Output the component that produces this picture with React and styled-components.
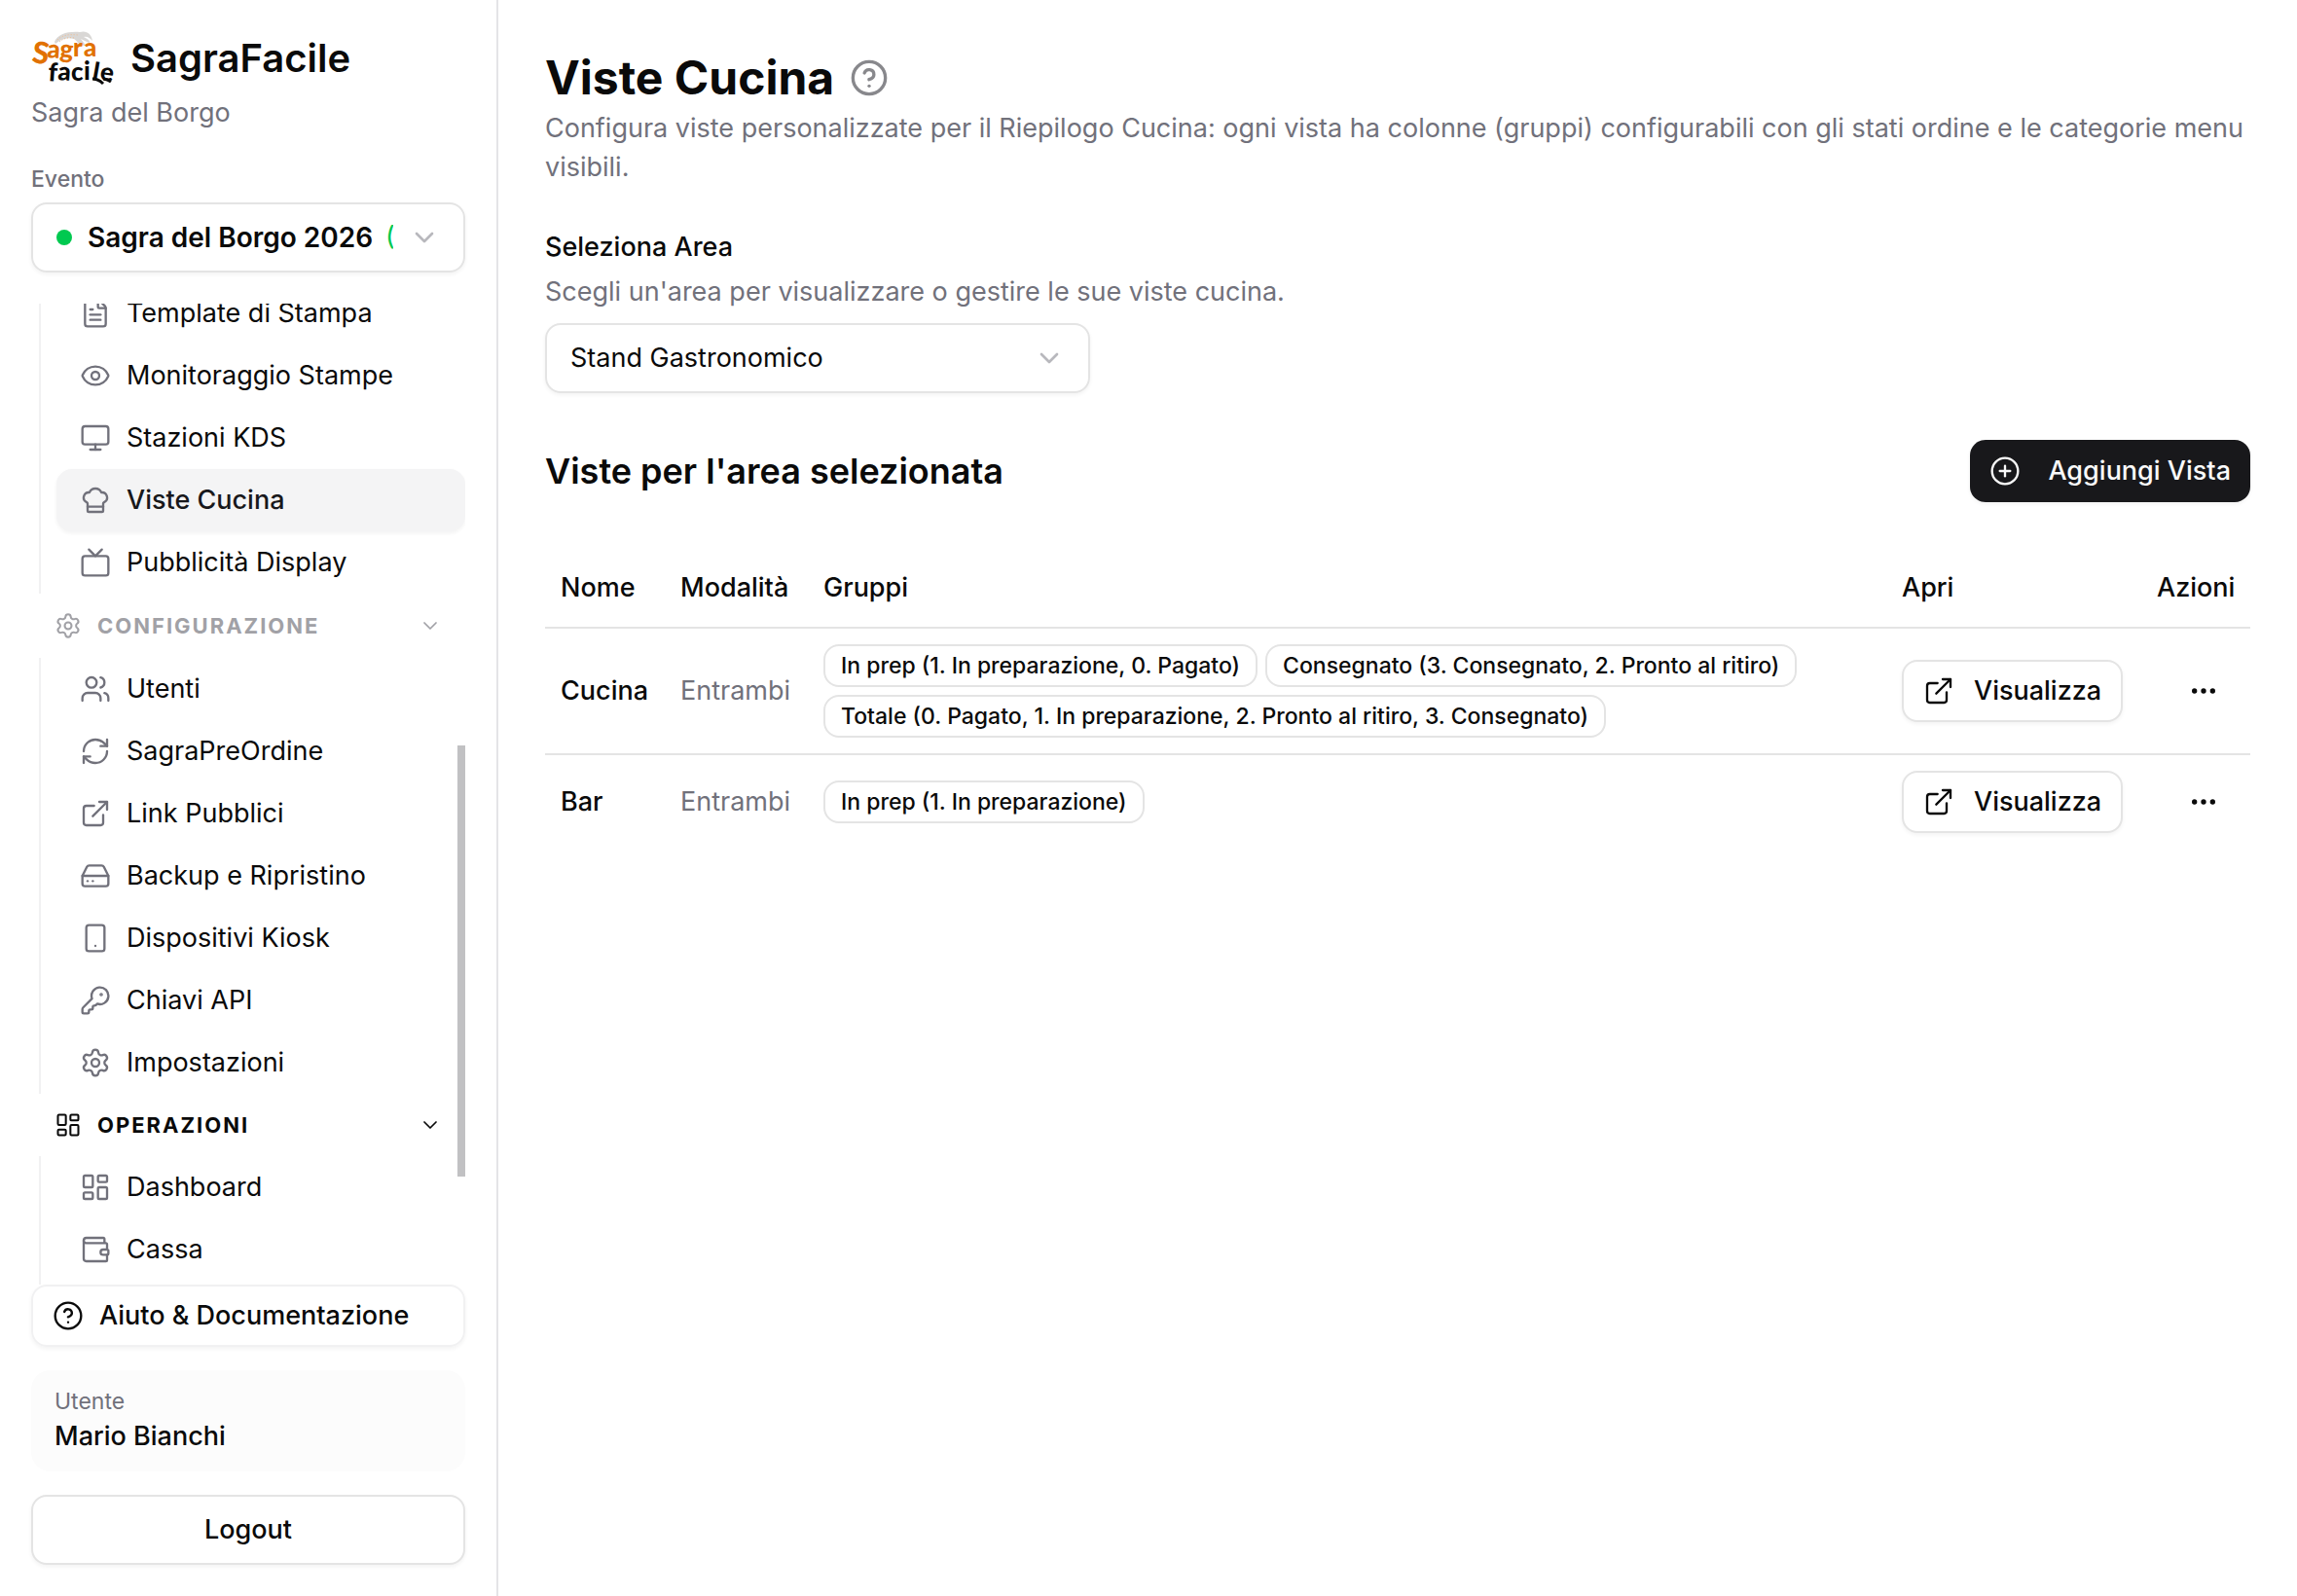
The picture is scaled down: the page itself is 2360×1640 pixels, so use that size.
import styled, { createGlobalStyle } from 'styled-components';
import {
  ChefHat,
  ChevronDown,
  CircleHelp,
  CirclePlus,
  Ellipsis,
  ExternalLink,
  Eye,
  FileText,
  HardDrive,
  KeyRound,
  LayoutDashboard,
  Monitor,
  RefreshCw,
  Settings,
  Smartphone,
  Tv,
  Users,
  Wallet,
} from 'lucide-react';

const GlobalStyle = createGlobalStyle`
  *, *::before, *::after {
    box-sizing: border-box;
  }

  body {
    margin: 0;
    background: #fff;
    color: #0a0a0a;
    font-family: Inter, 'Liberation Sans', sans-serif;
    font-size: 27px;
    line-height: 40px;
  }

  button, select {
    font: inherit;
    color: inherit;
  }

  h1, h2, p {
    margin: 0;
  }

  svg {
    flex-shrink: 0;
  }
`;

const Layout = styled.div`
  display: flex;
  height: 100vh;
`;

const Sidebar = styled.aside`
  display: flex;
  flex-direction: column;
  flex: none;
  width: 512px;
  padding: 32px;
  border-right: 2px solid #e4e4e7;
`;

const Brand = styled.div`
  display: flex;
  align-items: center;
  gap: 16px;
  height: 56px;
`;

const BrandName = styled.span`
  font-size: 40px;
  font-weight: 600;
`;

const OrgName = styled.p`
  margin-top: 8px;
  color: #71717b;
`;

const EventLabel = styled.label`
  margin: 32px 0 8px;
  color: #71717b;
  font-size: 23px;
  font-weight: 500;
  line-height: 32px;
`;

const SelectShell = styled.div`
  display: flex;
  align-items: center;
  gap: 16px;
  width: 100%;
  max-width: ${(props) => props.$maxWidth || 'none'};
  height: 72px;
  padding: 0 24px;
  border: 2px solid #e4e4e4;
  border-radius: 16px;
  box-shadow: 0 2px 4px rgba(0, 0, 0, 0.05);

  svg {
    color: #b8b8bd;
  }
`;

const SelectValue = styled.div`
  display: flex;
  flex: 1;
  align-items: center;
  gap: 12px;
  min-width: 0;
  overflow: hidden;
`;

const Select = styled.select`
  flex: ${(props) => (props.$grow ? 1 : 'none')};
  padding: 0;
  border: 0;
  outline: 0;
  background: none;
  appearance: none;
  font-size: ${(props) => (props.$strong ? 28 : 27)}px;
  font-weight: ${(props) => (props.$strong ? 600 : 400)};
`;

const Dot = styled.span`
  flex: none;
  width: 16px;
  height: 16px;
  margin-right: 4px;
  border-radius: 50%;
  background: #00c950;
`;

const Status = styled.span`
  flex: none;
  color: #00c950;
`;

const NavArea = styled.div`
  position: relative;
  display: flex;
  flex: 1;
  min-height: 0;
  margin-top: 32px;
`;

const Nav = styled.nav`
  display: flex;
  flex: 1;
  flex-direction: column;
  justify-content: flex-end;
  overflow: hidden;
`;

const ScrollThumb = styled.div`
  position: absolute;
  top: 45%;
  right: 0;
  width: 8px;
  height: 44%;
  background: #c1c1c3;
`;

const NavGroup = styled.div`
  flex: none;
  margin-left: 8px;
  padding: 0 0 ${(props) => (props.$last ? 4 : 0)}px 16px;
  border-left: 2px solid #f1f1f2;
`;

const NavHeader = styled.button`
  display: flex;
  flex: none;
  align-items: center;
  gap: 16px;
  height: ${(props) => (props.$active ? 64 : 66)}px;
  padding: 0 24px;
  border: 0;
  background: none;
  color: ${(props) => (props.$active ? '#0a0a0a' : '#a1a1a6')};
  font-size: 22px;
  font-weight: 700;
  letter-spacing: 2px;
  text-align: left;
  text-transform: uppercase;

  span {
    flex: 1;
  }
`;

const NavItem = styled.a`
  display: flex;
  align-items: center;
  gap: 16px;
  height: 64px;
  padding: 0 24px;
  border-radius: 16px;
  background: ${(props) => (props.$active ? '#f4f4f5' : 'transparent')};
  box-shadow: ${(props) => (props.$active ? '0 2px 4px rgba(0, 0, 0, 0.05)' : 'none')};
  color: ${(props) => (props.$active ? '#18181b' : '#0a0a0a')};
  font-weight: ${(props) => (props.$active ? 500 : 400)};
  text-decoration: none;

  svg {
    color: #71717b;
  }
`;

const HelpLink = styled.a`
  display: flex;
  align-items: center;
  gap: 16px;
  height: 64px;
  padding: 0 20px;
  border: 2px solid #f1f1f2;
  border-radius: 16px;
  box-shadow: 0 2px 4px rgba(0, 0, 0, 0.05);
  color: #0a0a0a;
  font-weight: 500;
  text-decoration: none;
`;

const UserCard = styled.div`
  margin: 24px 0;
  padding: 16px 24px;
  border-radius: 20px;
  background: #fcfcfc;
  font-weight: 500;
`;

const UserLabel = styled.p`
  color: #71717b;
  font-size: 23px;
  font-weight: 400;
  line-height: 32px;
`;

const Button = styled.button`
  display: inline-flex;
  align-items: center;
  justify-content: center;
  gap: ${(props) => props.$gap || 20}px;
  height: ${(props) => props.$height || 64}px;
  padding: 0 20px;
  border: ${(props) => (props.$primary ? '0' : '2px solid #e4e4e4')};
  border-radius: 16px;
  background: ${(props) => (props.$primary ? '#18181b' : '#fff')};
  box-shadow: 0 2px 4px rgba(0, 0, 0, 0.05);
  color: ${(props) => (props.$primary ? '#fafafa' : '#0a0a0a')};
  font-weight: 500;
  text-decoration: none;
  white-space: nowrap;
`;

const IconButton = styled.button`
  display: inline-flex;
  align-items: center;
  justify-content: center;
  width: 64px;
  height: 64px;
  padding: 0;
  border: 0;
  background: none;
  vertical-align: top;
`;

const Main = styled.main`
  flex: 1;
  min-width: 0;
  padding: 48px;
`;

const TitleRow = styled.div`
  display: flex;
  align-items: center;
  gap: 16px;
  height: 64px;
`;

const Title = styled.h1`
  font-size: 48px;
  font-weight: 700;
`;

const TitleHelp = styled.button`
  display: flex;
  padding: 0;
  border: 0;
  background: none;
  color: #88888c;
`;

const Muted = styled.p`
  color: #71717b;
`;

const AreaField = styled.div`
  display: flex;
  flex-direction: column;
  margin: 44px 0 48px;
`;

const AreaLabel = styled.label`
  margin-bottom: 8px;
  font-weight: 500;
  line-height: 36px;
`;

const AreaHint = styled(Muted)`
  margin-bottom: 12px;
`;

const SectionHead = styled.div`
  display: flex;
  align-items: center;
  justify-content: space-between;
  margin-bottom: 48px;
`;

const SectionTitle = styled.h2`
  font-size: 36px;
  font-weight: 600;
`;

const Table = styled.table`
  width: 100%;
  border-spacing: 0;
  table-layout: fixed;

  tr:not(:last-child) td {
    border-bottom: 2px solid #e4e4e4;
  }
`;

const Th = styled.th`
  width: ${(props) => (props.$width ? `${props.$width}px` : 'auto')};
  height: 82px;
  padding: 0 16px;
  border-bottom: 2px solid #e4e4e4;
  font-weight: 500;
  text-align: ${(props) => (props.$right ? 'right' : 'left')};
`;

const Td = styled.td`
  padding: 16px;
  color: ${(props) => (props.$muted ? '#71717b' : 'inherit')};
  font-weight: ${(props) => (props.$strong ? 500 : 400)};
  text-align: ${(props) => (props.$right ? 'right' : 'left')};
`;

const BadgeList = styled.div`
  display: flex;
  flex-wrap: wrap;
  gap: 8px;
`;

const Badge = styled.span`
  padding: 4px 16px;
  border: 2px solid #e4e4e4;
  border-radius: 16px;
  font-size: 23px;
  font-weight: 500;
  line-height: 32px;
  white-space: nowrap;
`;

const views = [
  {
    name: 'Cucina',
    mode: 'Entrambi',
    groups: [
      'In prep (1. In preparazione, 0. Pagato)',
      'Consegnato (3. Consegnato, 2. Pronto al ritiro)',
      'Totale (0. Pagato, 1. In preparazione, 2. Pronto al ritiro, 3. Consegnato)',
    ],
  },
  { name: 'Bar', mode: 'Entrambi', groups: ['In prep (1. In preparazione)'] },
];

const kitchenItems = [
  { label: 'Template di Stampa', icon: FileText },
  { label: 'Monitoraggio Stampe', icon: Eye },
  { label: 'Stazioni KDS', icon: Monitor },
  { label: 'Viste Cucina', icon: ChefHat, active: true },
  { label: 'Pubblicità Display', icon: Tv },
];

const configItems = [
  { label: 'Utenti', icon: Users },
  { label: 'SagraPreOrdine', icon: RefreshCw },
  { label: 'Link Pubblici', icon: ExternalLink },
  { label: 'Backup e Ripristino', icon: HardDrive },
  { label: 'Dispositivi Kiosk', icon: Smartphone },
  { label: 'Chiavi API', icon: KeyRound },
  { label: 'Impostazioni', icon: Settings },
];

const operationItems = [
  { label: 'Dashboard', icon: LayoutDashboard },
  { label: 'Cassa', icon: Wallet },
];

function Logo() {
  return (
    <svg width="86" height="56" viewBox="0 0 86 56" overflow="visible" role="img" aria-label="SagraFacile">
      {/* arm holding the fork */}
      <path
        d="M24 11C27 3 38 0 50 1C57 -1 62 3 63 10C60 7 58 5 54 6C58 8 61 10 60 12C56 11 54 9 51 8C53 11 56 13 55 15C49 14 47 10 44 8C37 6 31 8 25 13Z"
        fill="#d9d7d5"
      />
      <path d="M27 9C32 4 39 3 48 4M29 11C34 7 39 6 45 7" fill="none" stroke="#eebd93" strokeWidth="1" strokeDasharray="1 2" />
      <g strokeLinejoin="round" fontFamily="Lato, sans-serif" fontWeight="900">
        <text x="0 16 29 43 54" y="32 27 27 26 26" rotate="8 4 4 0 0" fontSize="26" fill="#e17100">
          <tspan fontSize="31">S</tspan>agra
        </text>
        <text x="17 27 41 54 62 70" y="51 50 51 50 50 50" rotate="4 4 0 0 10 8" fontSize="26" fill="#0a0a0a">
          facile
        </text>
      </g>
      <path d="M63 49Q69 49 74 54M74 49Q78 49 82 52" fill="none" stroke="#0a0a0a" strokeWidth="3" />
    </svg>
  );
}

function NavItems({ items, last }) {
  return (
    <NavGroup $last={last}>
      {items.map(({ label, icon: Icon, active }) => (
        <NavItem key={label} href="#" $active={active}>
          <Icon size={32} strokeWidth={1.75} />
          {label}
        </NavItem>
      ))}
    </NavGroup>
  );
}

function NavSection({ label, icon: Icon, active }) {
  return (
    <NavHeader type="button" $active={active}>
      <Icon size={28} strokeWidth={1.75} />
      <span>{label}</span>
      <ChevronDown size={24} strokeWidth={1.75} />
    </NavHeader>
  );
}

export default function App() {
  return (
    <Layout>
      <GlobalStyle />
      <Sidebar>
        <Brand>
          <Logo />
          <BrandName>SagraFacile</BrandName>
        </Brand>
        <OrgName>Sagra del Borgo</OrgName>
        <EventLabel htmlFor="event">Evento</EventLabel>
        <SelectShell>
          <SelectValue>
            <Dot />
            <Select id="event" $strong>
              <option>Sagra del Borgo 2026</option>
            </Select>
            <Status>(Attivo)</Status>
          </SelectValue>
          <ChevronDown size={32} />
        </SelectShell>

        <NavArea>
          <Nav>
            <NavItems items={kitchenItems} />
            <NavSection label="Configurazione" icon={Settings} />
            <NavItems items={configItems} />
            <NavSection label="Operazioni" icon={LayoutDashboard} active />
            <NavItems items={operationItems} last />
          </Nav>
          <ScrollThumb />
        </NavArea>

        <HelpLink href="#">
          <CircleHelp size={32} strokeWidth={1.75} />
          Aiuto &amp; Documentazione
        </HelpLink>
        <UserCard>
          <UserLabel>Utente</UserLabel>
          <p>Mario Bianchi</p>
        </UserCard>
        <Button type="button" $height={72}>
          Logout
        </Button>
      </Sidebar>

      <Main>
        <TitleRow>
          <Title>Viste Cucina</Title>
          <TitleHelp type="button" aria-label="Aiuto">
            <CircleHelp size={40} />
          </TitleHelp>
        </TitleRow>
        <Muted>
          Configura viste personalizzate per il Riepilogo Cucina: ogni vista ha colonne (gruppi) configurabili con gli
          stati ordine e le categorie menu visibili.
        </Muted>

        <AreaField>
          <AreaLabel htmlFor="area">Seleziona Area</AreaLabel>
          <AreaHint>Scegli un'area per visualizzare o gestire le sue viste cucina.</AreaHint>
          <SelectShell $maxWidth="560px">
            <Select id="area" $grow>
              <option>Stand Gastronomico</option>
            </Select>
            <ChevronDown size={32} />
          </SelectShell>
        </AreaField>

        <SectionHead>
          <SectionTitle>Viste per l'area selezionata</SectionTitle>
          <Button type="button" $primary $gap={28}>
            <CirclePlus size={32} strokeWidth={1.75} />
            Aggiungi Vista
          </Button>
        </SectionHead>

        <Table>
          <thead>
            <tr>
              <Th $width={123}>Nome</Th>
              <Th $width={147}>Modalità</Th>
              <Th>Gruppi</Th>
              <Th $width={262}>Apri</Th>
              <Th $width={112} $right>
                Azioni
              </Th>
            </tr>
          </thead>
          <tbody>
            {views.map((view) => (
              <tr key={view.name}>
                <Td $strong>{view.name}</Td>
                <Td $muted>{view.mode}</Td>
                <Td>
                  <BadgeList>
                    {view.groups.map((group) => (
                      <Badge key={group}>{group}</Badge>
                    ))}
                  </BadgeList>
                </Td>
                <Td>
                  <Button as="a" href="#">
                    <ExternalLink size={32} strokeWidth={1.75} />
                    Visualizza
                  </Button>
                </Td>
                <Td $right>
                  <IconButton type="button" aria-label="Azioni">
                    <Ellipsis size={32} />
                  </IconButton>
                </Td>
              </tr>
            ))}
          </tbody>
        </Table>
      </Main>
    </Layout>
  );
}
